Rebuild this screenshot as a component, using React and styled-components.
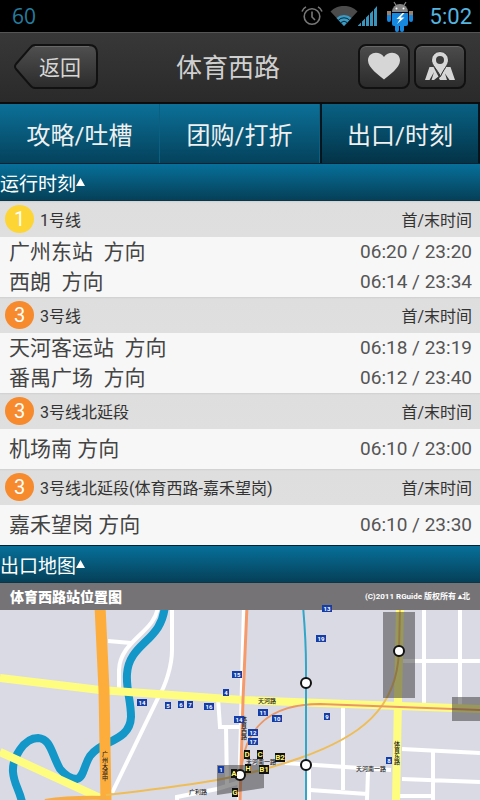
import styled, { createGlobalStyle } from "styled-components";

const GlobalStyle = createGlobalStyle`
  * {
    box-sizing: border-box;
  }

  body {
    margin: 0;
    background-color: #f7f7f7;
    font-family: Roboto, "Noto Sans CJK SC", sans-serif;
  }
`;

const StatusBar = styled.div`
  display: flex;
  align-items: center;
  height: 32px;
  padding: 0 8px 0 12px;
  background-color: #000;
`;

const Battery = styled.span`
  flex: 1;
  font-family: "Open Sans", sans-serif;
  font-size: 21px;
  color: #257c9f;
`;

const StatusIcons = styled.div`
  display: flex;
  align-items: center;
  height: 32px;

  svg {
    display: block;
  }
`;

const Clock = styled.time`
  margin-left: 16px;
  font-size: 22px;
  color: #55b5e0;
`;

const Header = styled.header`
  display: flex;
  align-items: center;
  height: 72px;
  padding: 0 14px 3px;
  border-top: 1px solid #555;
  border-bottom: 2px solid #0c0c0c;
  background: linear-gradient(#383838, #2a2a2a);
`;

const BackButton = styled.button`
  position: relative;
  width: 84px;
  height: 45px;
  padding: 0 0 0 8px;
  border: 0;
  background: none;
  font-family: inherit;
  font-size: 21px;
  color: #d6d6d6;
  cursor: pointer;

  svg {
    position: absolute;
    top: 0;
    left: 0;
  }

  span {
    position: relative;
  }
`;

const Title = styled.h1`
  flex: 1;
  margin: 0;
  padding-top: 4px;
  font-size: 26px;
  line-height: 36px;
  font-weight: 400;
  text-align: center;
  color: #cfcfcf;
`;

const Actions = styled.div`
  display: flex;
  gap: 4px;
`;

const IconButton = styled.button`
  display: flex;
  align-items: center;
  justify-content: center;
  width: 52px;
  height: 45px;
  padding: 0;
  border: 2px solid #111;
  border-radius: 8px;
  background: linear-gradient(#4c4c4c, #2b2b2b);
  box-shadow: inset 0 1px 0 #666;
  cursor: pointer;
`;

const Tabs = styled.nav`
  display: grid;
  grid-template-columns: repeat(3, 1fr);
  height: 59px;
  background: linear-gradient(#0c7098, #04425c);
`;

const Tab = styled.button`
  padding: 0;
  border: 0;
  border-left: ${(props) => (props.$active ? "2px solid #04151d" : "0")};
  border-right: ${(props) => (props.$active ? "2px solid #04151d" : "1px solid #0b5f80")};
  background: ${(props) =>
    props.$active ? "linear-gradient(#096184, #033347)" : "none"};
  font-family: inherit;
  font-size: 24px;
  color: #f0f0f0;
  cursor: pointer;
`;

const SectionBar = styled.button`
  display: flex;
  align-items: center;
  width: 100%;
  height: 38px;
  padding: 0;
  border: 0;
  border-top: 1px solid #052433;
  border-bottom: 1px solid #0a3647;
  background: linear-gradient(#07709a, #054058);
  font-family: inherit;
  font-size: 19px;
  color: #fff;
  cursor: pointer;
`;

const Arrow = styled.span`
  width: 9px;
  height: 8px;
  background-color: #fff;
  clip-path: polygon(50% 0, 100% 100%, 0 100%);
`;

const Table = styled.table`
  width: 100%;
  border-collapse: collapse;
`;

const HeadCell = styled.th`
  height: 36px;
  padding: ${(props) => (props.$right ? "0 8px 0 0" : "0 0 0 5px")};
  background: linear-gradient(#cfcfcf, #dedede 2px, #dfdfdf);
  font-size: 16px;
  font-weight: 400;
  text-align: ${(props) => (props.$right ? "right" : "left")};
  color: #333;
`;

const LineName = styled.span`
  display: flex;
  align-items: center;
  gap: 6px;
`;

const LineBadge = styled.span`
  display: flex;
  align-items: center;
  justify-content: center;
  width: 29px;
  height: 28px;
  border-radius: 50%;
  background-color: ${(props) => props.$color};
  font-size: 20px;
  color: #fff;
`;

const Cell = styled.td`
  height: ${(props) => (props.$tall ? "40px" : "30px")};
  padding: ${(props) => (props.$right ? "0 8px 0 0" : "0 0 0 9px")};
  background-color: #f7f7f7;
  font-size: ${(props) => (props.$right ? "19px" : "21px")};
  line-height: 30px;
  text-align: ${(props) => (props.$right ? "right" : "left")};
  white-space: pre;
  color: ${(props) => (props.$right ? "#555" : "#444")};
`;

const MapTitle = styled.div`
  display: flex;
  align-items: center;
  justify-content: space-between;
  height: 27px;
  padding: 0 10px;
  background-color: #757376;
  font-size: 14px;
  line-height: 20px;
  font-weight: 900;
  color: #fff;

  small {
    font-size: 8px;
    font-weight: 700;
  }
`;

const Map = styled.svg`
  display: block;
  width: 100%;
  overflow: visible;
  font-family: Roboto, "Noto Sans CJK SC", sans-serif;
`;

const lines = [
  {
    number: "1",
    color: "#fdd535",
    name: "1号线",
    rows: [
      ["广州东站  方向", "06:20 / 23:20"],
      ["西朗  方向", "06:14 / 23:34"],
    ],
  },
  {
    number: "3",
    color: "#f68a2c",
    name: "3号线",
    rows: [
      ["天河客运站  方向", "06:18 / 23:19"],
      ["番禺广场  方向", "06:12 / 23:40"],
    ],
  },
  {
    number: "3",
    color: "#f68a2c",
    name: "3号线北延段",
    rows: [["机场南 方向", "06:10 / 23:00"]],
  },
  {
    number: "3",
    color: "#f68a2c",
    name: "3号线北延段(体育西路-嘉禾望岗)",
    rows: [["嘉禾望岗 方向", "06:10 / 23:30"]],
  },
];

const busStops = [
  ["13", 327, 608],
  ["19", 321, 638],
  ["15", 237, 674],
  ["4", 226, 692],
  ["14", 142, 702],
  ["5", 168, 705],
  ["6", 181, 704],
  ["7", 190, 704],
  ["16", 209, 706],
  ["14", 239, 719],
  ["11", 263, 712],
  ["10", 277, 718],
  ["12", 253, 732],
  ["17", 253, 741],
  ["1", 221, 769],
  ["9", 327, 716],
  ["8", 389, 760],
];

const exits = [
  ["D", 247, 754],
  ["C", 260, 754],
  ["B2", 280, 757],
  ["H", 248, 768],
  ["B1", 264, 769],
  ["A", 234, 773],
  ["G", 235, 792],
];

const stations = [
  [306, 683],
  [306, 765],
  [399, 651],
  [240, 775],
];

const AlarmIcon = () => (
  <svg width="22" height="22" viewBox="0 0 22 22" fill="none" stroke="#777" strokeWidth="1.6">
    <circle cx="11" cy="11.5" r="7.8" />
    <path d="M11 6.5v5.5l3 3M1 6.5a8 8 0 0 1 4-4.6M21 6.5a8 8 0 0 0-4-4.6" />
  </svg>
);

const WifiIcon = () => (
  <svg width="28" height="20" viewBox="0 0 28 20">
    <path d="M14 20L0.5 5.5a19 19 0 0 1 27 0z" fill="#4b4b4b" />
    <path d="M14 20L6.5 12a11 11 0 0 1 15 0z" fill="#3a9cc6" />
    <path d="M8.5 14a8 8 0 0 1 11 0M11 16.5a4.500 4.500 0 0 1 6 0" fill="none" stroke="#0d2530" />
  </svg>
);

const SignalIcon = () => (
  <svg width="19" height="21" viewBox="0 0 19 21" fill="#3a94bb">
    <path d="M0 20h3v-3.5l-3 3zM4 20h3v-7.5l-3 3zM8 20h3v-11.5l-3 3zM12 20h3v-15.5l-3 3zM16 20h3V0l-3 3.5z" />
  </svg>
);

const RobotIcon = () => (
  <svg width="28" height="31" viewBox="0 0 28 31">
    <path d="M8 1l2.5 4M20 1l-2.5 4" stroke="#858585" strokeWidth="1.2" />
    <path d="M6 11a8 8 0 0 1 16 0z" fill="#858585" />
    <path d="M1 10h4v5H1zM23 10h4v5h-4z" fill="#99816f" />
    <path d="M1 14h4v5a2 2 0 0 1-4 0zM23 14h4v5a2 2 0 0 1-4 0zM6 12h16v11a2 2 0 0 1-2 2h-2v4a2 2 0 0 1-4 0v-4h-1v4a2 2 0 0 1-4 0v-4H8a2 2 0 0 1-2-2z" fill="#1688e0" />
    <circle cx="10.5" cy="7.5" r="1" fill="#fff" />
    <circle cx="17.5" cy="7.5" r="1" fill="#fff" />
    <path d="M16.5 12l-6 6h3.5l-3 5 7.5-6.5H14.5l4-4.5z" fill="#fff" />
  </svg>
);

const HeartIcon = () => (
  <svg width="34" height="28" viewBox="0 0 34 28">
    <path d="M17 27.5C12 23 1 16 1 8.5 1 0 12-2 17 5c5-7 16-5 16 3.5C33 16 22 23 17 27.5z" fill="#d6d6d6" />
  </svg>
);

const PlaceIcon = () => (
  <svg width="32" height="30" viewBox="0 0 32 30" fill="#d6d6d6">
    <path d="M5.5 16h4l5 9.500L10 29H7.5l2.5-8-4.5 8H1zM22 16h4.500L31 29h-5.500L21 22.500l2 6.500h-7l-1-1.500 2-3z" />
    <path d="M16 0.5a8.500 8.500 0 0 1 8.500 8.500c0 5-5 9-8 16.500C13 18 7.500 14 7.500 9A8.500 8.500 0 0 1 16 .5z" stroke="#333" strokeWidth="1" />
    <circle cx="16" cy="9" r="4" fill="#3d3d3d" />
  </svg>
);

const BackShape = () => (
  <svg width="84" height="45" viewBox="0 0 84 45" aria-hidden="true">
    <defs>
      <linearGradient id="back" x1="0" y1="0" x2="0" y2="1">
        <stop offset="0" stopColor="#505050" />
        <stop offset="1" stopColor="#2b2b2b" />
      </linearGradient>
    </defs>
    <path
      d="M21 1h54q8 0 8 8v27q0 8-8 8H21q-3 0-5-3L2 25q-2-2.5 0-5L16 4q2-3 5-3z"
      fill="url(#back)"
      stroke="#111"
      strokeWidth="2"
    />
    <path d="M21 2.5h54" stroke="#686868" />
  </svg>
);

const VerticalLabel = ({ text, x, y }) =>
  [...text].map((char, i) => (
    <text key={i} x={x} y={y + i * 6} fontSize="6">
      {char}
    </text>
  ));

const StationMap = () => (
  <Map viewBox="0 610 480 190" role="img" aria-label="体育西路站位置图">
    <clipPath id="area">
      <rect x="0" y="610" width="480" height="190" />
    </clipPath>
    <g clipPath="url(#area)" fill="none">
      <rect x="0" y="610" width="480" height="190" fill="#dadae5" />

      {/* side streets */}
      <g stroke="#fff" strokeWidth="4">
        <path d="M158 606C156 632 120 640 119 670V690M108 641L131 643" />
        <path d="M172 606V650C172 665 166 685 158 698L112 793" />
        <path d="M244 606L239 800M218 698L220 727H240M226 728L227 785" />
        <path d="M177 800V797L217 789L240 782M285 763L391 770M309 765V800" />
        <path d="M343 706V790M310 790L367 794M368 772L367 800" />
        <path d="M424 606V705M460 606V706M403 661H480" />
        <path d="M402 749L480 753M402 779L480 782M433 751V800M400 796H433" />
      </g>

      {/* river */}
      <path
        d="M165 604C163 642 129 642 127 674C126 690 131 700 131 717C130 742 101 740 90 756C84 765 84 777 77 779C70 779 65 775 60 769C51 753 51 739 38 738C24 738 12 758 13 772C14 784 19 789 22 802"
        stroke="#1397c8"
        strokeWidth="8"
      />

      {/* main roads */}
      <path d="M0 678L100 690L243 700L480 709M0 752L100 798" stroke="#fffd80" strokeWidth="8" />
      <path d="M400 606L398 700L396 802" stroke="#fffd80" strokeWidth="8" />
      <path d="M100 606L104 690L106 802" stroke="#fdad3b" strokeWidth="11" />
      <path d="M45 801Q70 797 106 798" stroke="#f6ad47" strokeWidth="4" />

      {/* metro lines */}
      <path
        d="M106 795Q170 788 217 780Q260 772 300 758C360 737 397 709 399 651L400 606"
        stroke="#efbd56"
        strokeWidth="2"
      />
      <path d="M247 606L243 700L240 802" stroke="#f69a69" strokeWidth="3" />
      <path d="M241 775C243 728 270 704 320 704L480 710" stroke="#ea9765" strokeWidth="2" />
      <path d="M303 606Q306 640 306 667V802" stroke="#31a6c6" strokeWidth="2" />

      <g fill="#333" fillOpacity="0.5">
        <rect x="383" y="612" width="32" height="86" />
        <rect x="452" y="697" width="28" height="24" />
        <path d="M217 765H264V788L217 795z" />
      </g>
    </g>

    <g fill="#222" fontWeight="500">
      <text x="258" y="703" fontSize="6">天河路</text>
      <text x="246" y="764" fontSize="6">天河南一路</text>
      <text x="189" y="794" fontSize="6">广利路</text>
      <text x="356" y="771" fontSize="6">天河南一路</text>
      <VerticalLabel text="广州大道中" x={102} y={756} />
      <VerticalLabel text="体育西路" x={241} y={721} />
      <VerticalLabel text="体育东路" x={394} y={746} />
    </g>

    {busStops.map(([label, x, y]) => (
      <g key={label + x}>
        <rect x={x - label.length * 2 - 1} y={y - 3} width={label.length * 4 + 2} height="7" fill="#153da8" />
        <text x={x} y={y + 3} fontSize="6" fontWeight="700" textAnchor="middle" fill="#fff">
          {label}
        </text>
      </g>
    ))}

    {stations.map(([cx, cy]) => (
      <circle key={cx + cy} cx={cx} cy={cy} r="5" fill="#fff" stroke="#111" strokeWidth="2" />
    ))}

    {exits.map(([label, x, y]) => (
      <g key={label}>
        <rect x={x - label.length * 2 - 1} y={y - 4} width={label.length * 4 + 2} height="9" fill="#111" />
        <text x={x} y={y + 3} fontSize="8" fontWeight="700" textAnchor="middle" fill="#fff56b">
          {label}
        </text>
      </g>
    ))}
  </Map>
);

const App = () => {
  return (
    <>
      <GlobalStyle />
      <StatusBar>
        <Battery>60</Battery>
        <StatusIcons>
          <AlarmIcon />
          <svg width="7" height="1" />
          <WifiIcon />
          <SignalIcon />
          <svg width="9" height="1" />
          <RobotIcon />
        </StatusIcons>
        <Clock>5:02</Clock>
      </StatusBar>
      <Header>
        <BackButton>
          <BackShape />
          <span>返回</span>
        </BackButton>
        <Title>体育西路</Title>
        <Actions>
          <IconButton aria-label="收藏">
            <HeartIcon />
          </IconButton>
          <IconButton aria-label="地图">
            <PlaceIcon />
          </IconButton>
        </Actions>
      </Header>
      <Tabs>
        <Tab>攻略/吐槽</Tab>
        <Tab>团购/打折</Tab>
        <Tab $active>出口/时刻</Tab>
      </Tabs>
      <SectionBar>
        运行时刻
        <Arrow />
      </SectionBar>
      {lines.map((line) => (
        <Table key={line.name}>
          <thead>
            <tr>
              <HeadCell>
                <LineName>
                  <LineBadge $color={line.color}>{line.number}</LineBadge>
                  {line.name}
                </LineName>
              </HeadCell>
              <HeadCell $right>首/末时间</HeadCell>
            </tr>
          </thead>
          <tbody>
            {line.rows.map(([direction, time]) => (
              <tr key={direction}>
                <Cell $tall={line.rows.length === 1}>{direction}</Cell>
                <Cell $right $tall={line.rows.length === 1}>
                  {time}
                </Cell>
              </tr>
            ))}
          </tbody>
        </Table>
      ))}
      <SectionBar>
        出口地图
        <Arrow />
      </SectionBar>
      <MapTitle>
        体育西路站位置图
        <small>(C)2011 RGuide 版权所有 ▴北</small>
      </MapTitle>
      <StationMap />
    </>
  );
};

export default App;
